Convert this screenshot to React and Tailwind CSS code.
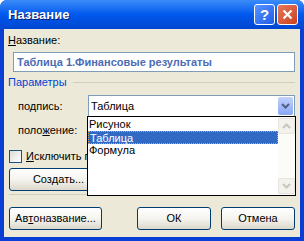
import React from 'react';

const font = { fontFamily: '"Liberation Sans", Arial, sans-serif' };

const XpButton = ({ children, className = '' }) => (
  <div className={`h-[23px] rounded-[3px] border border-[#003c74] bg-gradient-to-b from-white via-[#f5f4ef] to-[#dcd8cc] flex items-center justify-center text-[11px] text-black ${className}`}>
    {children}
  </div>
);

const App = () => {
  return (
    <div style={font} className="w-[304px] h-[241px] flex flex-col bg-[#0a3fd6] rounded-t-[7px] overflow-hidden">
      {/* title bar */}
      <div className="h-[29px] shrink-0 flex items-center pl-[8px] pr-[6px] bg-gradient-to-b from-[#3a8cf8] via-[#0058ee] to-[#0046d0]">
        <span className="flex-1 text-white font-bold text-[13px] [text-shadow:1px_1px_0_#0a1e6e]">Название</span>
        <div className="flex gap-[2px]">
          <div className="w-[21px] h-[21px] rounded-[3px] border border-white bg-gradient-to-br from-[#5a93ff] to-[#1e5ce8] flex items-center justify-center text-white font-bold text-[15px] leading-none">?</div>
          <div className="w-[21px] h-[21px] rounded-[3px] border border-white bg-gradient-to-br from-[#e8785a] to-[#c8401c] flex items-center justify-center">
            <svg width="11" height="11" viewBox="0 0 11 11"><path d="M1.5 1.5 L9.5 9.5 M9.5 1.5 L1.5 9.5" stroke="white" strokeWidth="2.2" /></svg>
          </div>
        </div>
      </div>

      {/* body */}
      <div className="flex-1 mx-[4px] mb-[4px] bg-[#ece9d8] relative text-[11px] text-black">
        <div className="pl-[4px] pt-[5px] leading-[13px]">
          <span className="underline">Н</span>азвание:
        </div>
        <div className="ml-[9px] mr-[5px] mt-[5px] h-[20px] border border-[#7f9db9] bg-white flex items-center pl-[3px] font-bold text-[#4c6cb4]">
          Таблица 1.Финансовые результаты
        </div>
        <div className="flex items-center pl-[4px] mt-[4px] h-[13px] mr-[5px]">
          <span className="text-[#0046d5]">Параметры</span>
          <div className="flex-1 ml-[6px] h-px bg-[#d0d0bf]" />
        </div>

        <div className="flex items-center mt-[6px] mr-[5px]">
          <span className="w-[84px] pl-[14px]">по<span className="underline">д</span>пись:</span>
          <div className="flex-1 h-[22px] border border-[#7f9db9] bg-white flex items-center pl-[2px]">
            <span className="flex-1">Таблица</span>
            <div className="w-[15px] h-[18px] mr-px rounded-[2px] bg-gradient-to-b from-[#c2d2fc] to-[#8aa6f4] flex items-center justify-center">
              <svg width="9" height="6" viewBox="0 0 9 6"><path d="M1 1 L4.5 4.5 L8 1" stroke="#4d6185" strokeWidth="2" fill="none" /></svg>
            </div>
          </div>
        </div>

        <div className="flex items-center mt-[2px] mr-[5px]">
          <span className="w-[84px] pl-[14px]">поло<span className="underline">ж</span>ение:</span>
          <div className="flex-1 h-[22px] border border-[#7f9db9] bg-white" />
        </div>

        <div className="flex items-center mt-[9px] pl-[5px] h-[13px]">
          <div className="w-[13px] h-[13px] shrink-0 border border-[#1c5180] bg-gradient-to-br from-[#dcdcd7] to-white" />
          <span className="ml-[4px] w-[61px] overflow-hidden whitespace-nowrap"><span className="underline">И</span>сключить подпись</span>
        </div>

        <XpButton className="ml-[5px] mt-[5px] w-[99px] h-[22px]">Соз<span className="underline">д</span>ать...</XpButton>

        <div className="ml-[5px] mr-[5px] mt-[3px] h-px bg-[#d0d0bf]" />

        <div className="flex mt-[12px] px-[5px]">
          <XpButton className="w-[93px]">Ав<span className="underline">т</span>оназвание...</XpButton>
          <div className="flex-1" />
          <XpButton className="w-[74px]">ОК</XpButton>
          <XpButton className="w-[74px] ml-[10px]">Отмена</XpButton>
        </div>

        {/* open dropdown list */}
        <div className="absolute left-[83px] top-[87px] w-[209px] h-[80px] border border-black bg-white flex">
          <div className="flex-1 pt-px">
            <div className="h-[13px] leading-[13px] pl-[1px]">Рисунок</div>
            <div className="h-[13px] leading-[12px] pl-[1px] bg-[#316ac5] text-white border border-dotted border-[#e8a040]">Таблица</div>
            <div className="h-[13px] leading-[13px] pl-[1px]">Формула</div>
          </div>
          <div className="w-[17px] bg-[#fbfbf8] flex flex-col justify-between py-px">
            <div className="h-[16px] rounded-[2px] border border-[#e6e4dc] bg-[#f3f2ec] flex items-center justify-center">
              <svg width="9" height="6" viewBox="0 0 9 6"><path d="M1 5 L4.5 1.5 L8 5" stroke="#c9c7ba" strokeWidth="2" fill="none" /></svg>
            </div>
            <div className="h-[16px] rounded-[2px] border border-[#e6e4dc] bg-[#f3f2ec] flex items-center justify-center">
              <svg width="9" height="6" viewBox="0 0 9 6"><path d="M1 1 L4.5 4.5 L8 1" stroke="#c9c7ba" strokeWidth="2" fill="none" /></svg>
            </div>
          </div>
        </div>
      </div>
    </div>
  );
};

export default App;
